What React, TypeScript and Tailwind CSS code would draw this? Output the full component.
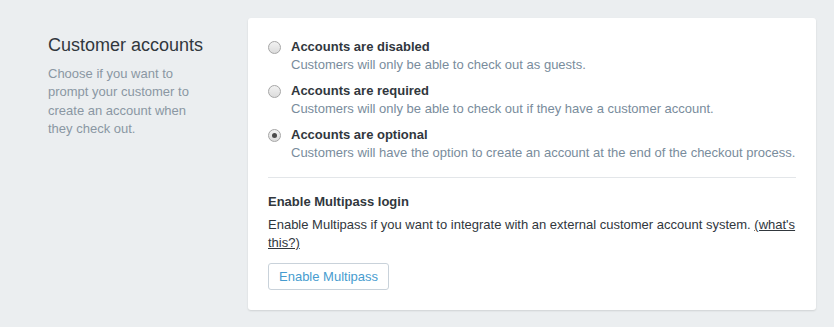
import React, { useState } from 'react'

const options = [
  { id: 'disabled', title: 'Accounts are disabled', desc: 'Customers will only be able to check out as guests.' },
  { id: 'required', title: 'Accounts are required', desc: 'Customers will only be able to check out if they have a customer account.' },
  { id: 'optional', title: 'Accounts are optional', desc: 'Customers will have the option to create an account at the end of the checkout process.' },
]

const Radio = ({ checked }: { checked: boolean }) => (
  <span className="mt-[3px] flex h-[13px] w-[13px] shrink-0 items-center justify-center rounded-full border border-[#a6a6a6] bg-gradient-to-b from-[#f2f2f2] to-[#dcdcdc]">
    {checked && <span className="h-[5px] w-[5px] rounded-full bg-[#4a4a4a]" />}
  </span>
)

export default function App() {
  const [selected, setSelected] = useState('optional')

  return (
    <div className="min-h-[327px] bg-[#ebeef0] font-['Liberation_Sans',Arial,sans-serif] text-[13px] leading-[18px]">
      <div className="flex pl-[48px] pt-[18px]">
        {/* left description */}
        <div className="w-[200px] shrink-0 pt-[16px]">
          <h2 className="text-[18px] leading-[22px] text-[#31373d]">Customer accounts</h2>
          <p className="mt-[9px] w-[160px] text-[13px] leading-[18.3px] text-[#8a97a3]">
            Choose if you want to prompt your customer to create an account when they check out.
          </p>
        </div>

        {/* card */}
        <div className="w-[568px] rounded-[3px] bg-white px-[20px] pb-[20px] pt-[20px] shadow-[0_1px_2px_rgba(0,0,0,0.12)]">
          <div className="flex flex-col gap-[8px]">
            {options.map(o => (
              <label key={o.id} className="flex cursor-pointer gap-[10px]" onClick={() => setSelected(o.id)}>
                <Radio checked={selected === o.id} />
                <div>
                  <div className="font-bold text-[#31373d]">{o.title}</div>
                  <div className="text-[#798c9c]">{o.desc}</div>
                </div>
              </label>
            ))}
          </div>

          <div className="mt-[15px] border-t border-[#e3e6e9]" />

          <div className="pt-[15px]">
            <div className="font-bold text-[#31373d]">Enable Multipass login</div>
            <p className="mt-[5px] text-[#31373d]">
              Enable Multipass if you want to integrate with an external customer account system.{' '}
              <a href="#" className="text-[#31373d] underline">(what's this?)</a>
            </p>
            <button className="mt-[11px] h-[27px] rounded-[3px] border border-[#c9d2da] bg-white px-[10px] text-[13px] text-[#479ccf]">
              Enable Multipass
            </button>
          </div>
        </div>
      </div>
    </div>
  )
}
